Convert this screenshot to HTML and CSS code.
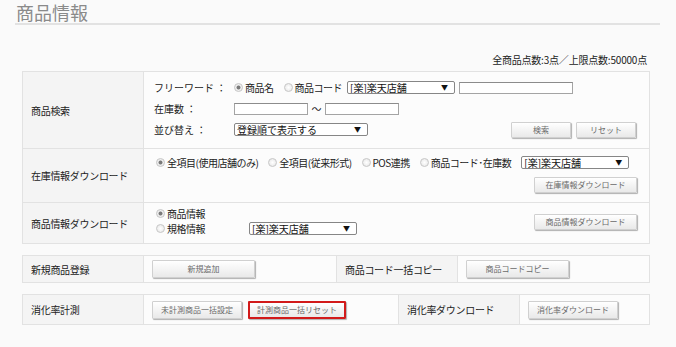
FILE: index.html
```html
<!DOCTYPE html>
<html lang="ja">
<head>
    <meta charset="UTF-8">
    <title>商品情報</title>
    <link rel="stylesheet" href="styles.css">
</head>
<body>
<div class="page">
    <h1 class="page-title">商品情報</h1>

    <div class="content">
        <p class="summary">全商品点数:3点／上限点数:50000点</p>

        <table class="panel">
            <tr class="row-search">
                <th>商品検索</th>
                <td>
                    <div class="line">
                        <span class="line-label">フリーワード ：</span>
                        <label class="radio"><input type="radio" name="kw" checked>商品名</label>
                        <label class="radio"><input type="radio" name="kw">商品コード</label>
                        <span class="select shop-select"><select><option>[楽]楽天店舗</option></select></span>
                        <input type="text" class="text text-keyword">
                    </div>
                    <div class="line">
                        <span class="line-label">在庫数 ：</span>
                        <input type="text" class="text text-num">
                        <span class="tilde">～</span>
                        <input type="text" class="text text-num">
                    </div>
                    <div class="line">
                        <span class="line-label">並び替え ：</span>
                        <span class="select sort-select"><select><option>登録順で表示する</option></select></span>
                        <div class="actions">
                            <button class="btn btn-small">検索</button>
                            <button class="btn btn-small">リセット</button>
                        </div>
                    </div>
                </td>
            </tr>
            <tr class="row-stock">
                <th>在庫情報ダウンロード</th>
                <td>
                    <div class="line-sm">
                        <label class="radio"><input type="radio" name="stock" checked>全項目(使用店舗のみ)</label>
                        <label class="radio"><input type="radio" name="stock">全項目(従来形式)</label>
                        <label class="radio"><input type="radio" name="stock">POS連携</label>
                        <label class="radio"><input type="radio" name="stock">商品コード･在庫数</label>
                        <span class="select shop-select"><select><option>[楽]楽天店舗</option></select></span>
                    </div>
                    <div class="actions-right">
                        <button class="btn btn-wide">在庫情報ダウンロード</button>
                    </div>
                </td>
            </tr>
            <tr class="row-item">
                <th>商品情報ダウンロード</th>
                <td>
                    <div class="split">
                        <div class="choices">
                            <div class="line-xs">
                                <label class="radio"><input type="radio" name="item" checked>商品情報</label>
                            </div>
                            <div class="line-xs">
                                <label class="radio radio-fixed"><input type="radio" name="item">規格情報</label>
                                <span class="select shop-select"><select><option>[楽]楽天店舗</option></select></span>
                            </div>
                        </div>
                        <button class="btn btn-wide">商品情報ダウンロード</button>
                    </div>
                </td>
            </tr>
        </table>

        <table class="panel panel-action">
            <tr>
                <th>新規商品登録</th>
                <td class="cell-register"><button class="btn btn-wide">新規追加</button></td>
                <th>商品コード一括コピー</th>
                <td><button class="btn btn-wide">商品コードコピー</button></td>
            </tr>
        </table>

        <table class="panel panel-action">
            <tr>
                <th>消化率計測</th>
                <td class="cell-measure">
                    <div class="btn-row">
                        <button class="btn">未計測商品一括設定</button>
                        <button class="btn btn-alert">計測商品一括リセット</button>
                    </div>
                </td>
                <th>消化率ダウンロード</th>
                <td><button class="btn">消化率ダウンロード</button></td>
            </tr>
        </table>
    </div>
</div>
</body>
</html>
```

FILE: styles.css
```css
body {
    margin: 0;
    background-color: #fafafa;
    color: #222;
    font-family: "Noto Sans CJK JP", "Noto Sans", sans-serif;
    font-size: 10px;
}

.page {
    width: 645px;
    padding: 2px 0 0 15px;
}

.page-title {
    margin: 0;
    padding-left: 1px;
    font-size: 18px;
    font-weight: normal;
    line-height: 21px;
    color: #8a8a8a;
    border-bottom: 2px solid #e2e2e2;
}

.content {
    width: 628px;
    margin-left: 7px;
}

.summary {
    margin: 28px 0 4px;
    padding-right: 3px;
    text-align: right;
    line-height: 14px;
    letter-spacing: -0.2px;
}

/* panels */
.panel {
    width: 628px;
    border-collapse: collapse;
    background-color: #fcfcfc;
    margin-bottom: 11px;
}

.panel th,
.panel td {
    border: 1px solid #e2e2e2;
    padding: 0;
}

.panel th {
    width: 112px;
    padding-left: 8px;
    text-align: left;
    font-weight: normal;
    background-color: #f4f4f4;
    letter-spacing: -0.3px;
}

.panel td {
    vertical-align: top;
    padding: 0 12px 0 10px;
}

.row-search { height: 77px; }
.row-stock { height: 54px; }
.row-item { height: 41px; }

.row-search td { padding-top: 5px; }
.row-stock td { padding-top: 5px; }
.row-item td { padding-top: 3px; }

.line {
    display: flex;
    align-items: center;
    height: 21px;
}

.line-sm {
    display: flex;
    align-items: center;
    height: 16px;
    white-space: nowrap;
}

.line-xs {
    display: flex;
    align-items: center;
    height: 15px;
}

.line-label {
    width: 80px;
}

.actions {
    display: flex;
    gap: 5px;
    margin-left: auto;
    margin-right: 1px;
}

.actions-right {
    display: flex;
    justify-content: flex-end;
    margin-top: 7px;
}

.split {
    display: flex;
    justify-content: space-between;
    align-items: flex-start;
}

.split .btn {
    margin-top: 8px;
}

/* form parts */
.radio {
    display: inline-flex;
    align-items: center;
    flex-shrink: 0;
    margin-right: 10px;
    white-space: nowrap;
    letter-spacing: -0.5px;
}

.line-sm .radio:first-child,
.line-xs .radio {
    margin-left: 2px;
}

.radio input {
    appearance: none;
    width: 9px;
    height: 9px;
    margin: 0 2px 0 0;
    border: 1px solid #c8c8c8;
    border-radius: 50%;
    background: radial-gradient(circle, #ffffff 0, #e4e4e4 100%);
}

.radio input:checked {
    background: radial-gradient(circle, #7a7a7a 0, #7a7a7a 1.6px, #f4f4f4 2.4px, #dedede 100%);
}

.radio-fixed {
    width: 93px;
    margin-right: 0;
}

.select {
    position: relative;
    display: inline-block;
    flex-shrink: 0;
}

.select select {
    appearance: none;
    display: block;
    box-sizing: border-box;
    height: 13px;
    margin: 0;
    padding: 0 0 0 2px;
    border: 1px solid #868686;
    border-radius: 2px;
    background-color: #fff;
    color: #111;
    font-family: inherit;
    font-size: 10px;
    line-height: 11px;
}

.select::after {
    content: "▼";
    position: absolute;
    right: 7px;
    top: 2px;
    font-size: 7px;
    line-height: 9px;
    color: #111;
    pointer-events: none;
}

.shop-select select { width: 108px; }
.sort-select select { width: 134px; }

.line .shop-select { margin-left: -5px; }

.text {
    box-sizing: border-box;
    height: 12px;
    margin: 0;
    padding: 0;
    border: 1px solid #a4a4a4;
    border-top-color: #8c8c8c;
    background-color: #fff;
}

.text-keyword {
    width: 114px;
    margin-left: 4px;
}

.text-num {
    width: 74px;
}

.tilde {
    width: 17px;
    text-align: center;
}

/* buttons */
.btn {
    box-sizing: border-box;
    height: 16px;
    padding: 0 8px;
    border: 1px solid #d0d0d0;
    border-radius: 1px;
    background: linear-gradient(#ffffff, #e9e9e9);
    box-shadow: 1px 1px 1px #b0b0b0;
    color: #6a6a6a;
    font-family: inherit;
    font-size: 8px;
    line-height: 12px;
    cursor: pointer;
}

.btn-small { width: 60px; }
.btn-wide { min-width: 103px; }

.panel-action tr { height: 27px; }
.panel-action th,
.panel-action td { vertical-align: middle; }
.panel-action td { padding: 0 0 0 8px; }
.panel-action .btn { height: 18px; }

.cell-register { width: 184px; }
.cell-measure { width: 246px; }

.panel-action:last-child tr { height: 30px; }

.btn-row {
    display: flex;
    gap: 6px;
}

.btn-alert {
    border: 2px solid #d21a1a;
    padding: 0 7px;
}
```
